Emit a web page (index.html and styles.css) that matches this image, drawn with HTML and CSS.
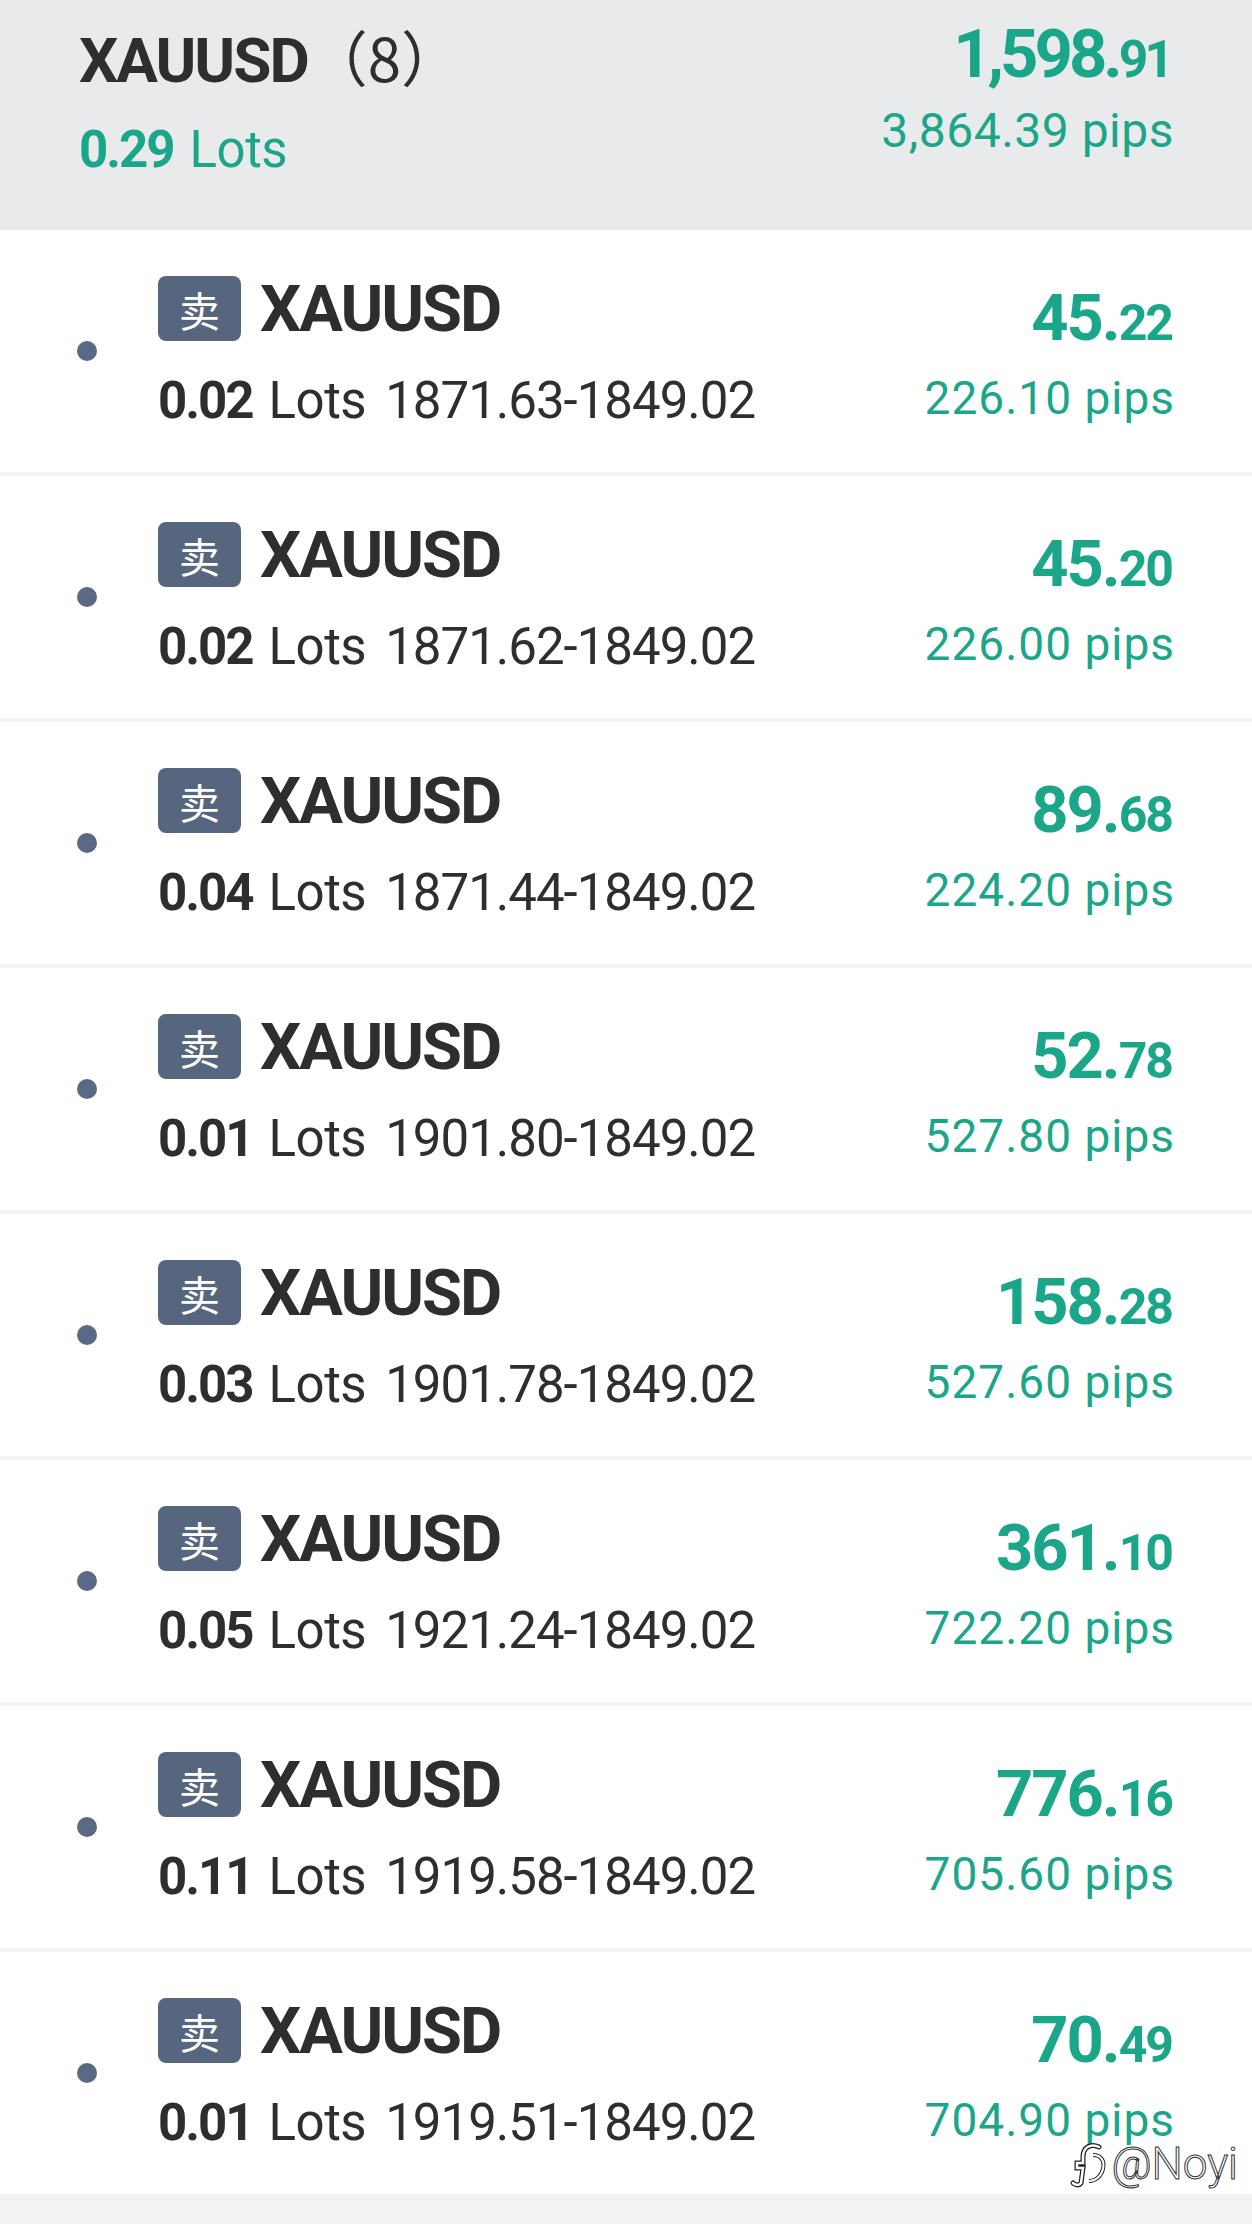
FILE: index.html
```html
<!DOCTYPE html>
<html lang="zh-CN">
<head>
    <meta charset="UTF-8">
    <meta name="viewport" content="width=device-width, initial-scale=1.0">
    <title>XAUUSD</title>
    <link rel="stylesheet" href="styles.css">
</head>
<body>
    <header class="summary">
        <div class="summary-left">
            <div class="summary-name">XAUUSD<span class="summary-count">（8）</span></div>
            <div class="summary-lots"><strong>0.29</strong><span class="lots">Lots</span></div>
        </div>
        <div class="summary-right">
            <div class="summary-profit">1,598.<span class="cents">91</span></div>
            <div class="summary-pips">3,864.39 pips</div>
        </div>
    </header>

    <div class="orders">
        <div class="order">
            <span class="order-dot"></span>
            <div class="order-info">
                <div class="order-head"><span class="badge">卖</span><span class="order-symbol">XAUUSD</span></div>
                <div class="order-meta"><strong>0.02</strong><span class="lots">Lots</span><span class="range">1871.63-1849.02</span></div>
            </div>
            <div class="order-result">
                <div class="order-profit">45.<span class="cents">22</span></div>
                <div class="order-pips">226.10 pips</div>
            </div>
        </div>

        <div class="order">
            <span class="order-dot"></span>
            <div class="order-info">
                <div class="order-head"><span class="badge">卖</span><span class="order-symbol">XAUUSD</span></div>
                <div class="order-meta"><strong>0.02</strong><span class="lots">Lots</span><span class="range">1871.62-1849.02</span></div>
            </div>
            <div class="order-result">
                <div class="order-profit">45.<span class="cents">20</span></div>
                <div class="order-pips">226.00 pips</div>
            </div>
        </div>

        <div class="order">
            <span class="order-dot"></span>
            <div class="order-info">
                <div class="order-head"><span class="badge">卖</span><span class="order-symbol">XAUUSD</span></div>
                <div class="order-meta"><strong>0.04</strong><span class="lots">Lots</span><span class="range">1871.44-1849.02</span></div>
            </div>
            <div class="order-result">
                <div class="order-profit">89.<span class="cents">68</span></div>
                <div class="order-pips">224.20 pips</div>
            </div>
        </div>

        <div class="order">
            <span class="order-dot"></span>
            <div class="order-info">
                <div class="order-head"><span class="badge">卖</span><span class="order-symbol">XAUUSD</span></div>
                <div class="order-meta"><strong>0.01</strong><span class="lots">Lots</span><span class="range">1901.80-1849.02</span></div>
            </div>
            <div class="order-result">
                <div class="order-profit">52.<span class="cents">78</span></div>
                <div class="order-pips">527.80 pips</div>
            </div>
        </div>

        <div class="order">
            <span class="order-dot"></span>
            <div class="order-info">
                <div class="order-head"><span class="badge">卖</span><span class="order-symbol">XAUUSD</span></div>
                <div class="order-meta"><strong>0.03</strong><span class="lots">Lots</span><span class="range">1901.78-1849.02</span></div>
            </div>
            <div class="order-result">
                <div class="order-profit">158.<span class="cents">28</span></div>
                <div class="order-pips">527.60 pips</div>
            </div>
        </div>

        <div class="order">
            <span class="order-dot"></span>
            <div class="order-info">
                <div class="order-head"><span class="badge">卖</span><span class="order-symbol">XAUUSD</span></div>
                <div class="order-meta"><strong>0.05</strong><span class="lots">Lots</span><span class="range">1921.24-1849.02</span></div>
            </div>
            <div class="order-result">
                <div class="order-profit">361.<span class="cents">10</span></div>
                <div class="order-pips">722.20 pips</div>
            </div>
        </div>

        <div class="order">
            <span class="order-dot"></span>
            <div class="order-info">
                <div class="order-head"><span class="badge">卖</span><span class="order-symbol">XAUUSD</span></div>
                <div class="order-meta"><strong>0.11</strong><span class="lots">Lots</span><span class="range">1919.58-1849.02</span></div>
            </div>
            <div class="order-result">
                <div class="order-profit">776.<span class="cents">16</span></div>
                <div class="order-pips">705.60 pips</div>
            </div>
        </div>

        <div class="order">
            <span class="order-dot"></span>
            <div class="order-info">
                <div class="order-head"><span class="badge">卖</span><span class="order-symbol">XAUUSD</span></div>
                <div class="order-meta"><strong>0.01</strong><span class="lots">Lots</span><span class="range">1919.51-1849.02</span></div>
            </div>
            <div class="order-result">
                <div class="order-profit">70.<span class="cents">49</span></div>
                <div class="order-pips">704.90 pips</div>
            </div>
        </div>
    </div>

    <!-- watermark over the last row -->
    <div class="watermark">
        <svg class="watermark-logo" width="40" height="50" viewBox="0 0 40 50">
            <path d="M30 8 C22 4 14 8 14 18 L14 24 L8 24 L8 29 L14 29 L12 44 C10 47 6 46 4 44"
                  fill="none" stroke="#222" stroke-width="5" stroke-linecap="round"/>
            <path d="M30 8 C22 4 14 8 14 18 L14 24 L8 24 L8 29 L14 29 L12 44 C10 47 6 46 4 44"
                  fill="none" stroke="#fff" stroke-width="2.5" stroke-linecap="round"/>
            <path d="M24 16 C32 16 36 22 34 30 C32 38 26 42 20 42"
                  fill="none" stroke="#222" stroke-width="4"/>
            <path d="M24 16 C32 16 36 22 34 30 C32 38 26 42 20 42"
                  fill="none" stroke="#fff" stroke-width="2"/>
        </svg>
        <span>@Noyi</span>
    </div>
</body>
</html>
```

FILE: styles.css
```css
body {
    font-family: Roboto, "Noto Sans CJK SC", sans-serif;
    margin: 0;
    padding: 0;
    background-color: #f2f2f3;
    color: #2e2e2e;
    position: relative;
    min-height: 2224px;
}

strong {
    font-weight: bold;
    letter-spacing: -2px;
}

.lots {
    margin-left: 16px;
    letter-spacing: -0.5px;
}

/* summary header */
.summary {
    display: flex;
    justify-content: space-between;
    align-items: flex-start;
    box-sizing: border-box;
    height: 230px;
    padding: 22px 78px 0 79px;
    background-color: #e9eaec;
}

.summary-left {
    padding-top: 4px;
}

.summary-name {
    font-size: 62px;
    font-weight: bold;
    line-height: 64px;
    letter-spacing: -2px;
}

.summary-count {
    font-weight: normal;
    font-family: "Noto Sans CJK SC", sans-serif;
    font-size: 60px;
    line-height: 1;
    letter-spacing: 0;
}

.summary-lots {
    margin-top: 32px;
    font-size: 51px;
    line-height: 50px;
    color: #1ba68a;
}

.summary-right {
    text-align: right;
    color: #1ba68a;
}

.summary-profit {
    font-size: 67px;
    font-weight: bold;
    line-height: 64px;
    letter-spacing: -4px;
    margin-right: 4px;
}

.summary-pips {
    margin-top: 20px;
    font-size: 48px;
    line-height: 50px;
    letter-spacing: 0.5px;
}

.cents {
    font-size: 0.77em;
    line-height: 1;
}

/* order rows */
.order {
    display: flex;
    align-items: center;
    box-sizing: border-box;
    height: 242px;
    margin-bottom: 4px;
    padding: 0 78px 0 77px;
    background-color: white;
}

.order-dot {
    width: 20px;
    height: 20px;
    border-radius: 50%;
    background-color: #5a6984;
    margin-right: 61px;
    flex-shrink: 0;
}

.order-info {
    flex: 1;
}

.order-head {
    display: flex;
    align-items: center;
    height: 64px;
}

.badge {
    display: flex;
    align-items: center;
    justify-content: center;
    width: 83px;
    height: 65px;
    margin-right: 19px;
    border-radius: 8px;
    background-color: #57667f;
    color: white;
    font-family: "Noto Sans CJK SC", sans-serif;
    font-size: 41px;
    font-weight: normal;
}

.order-symbol {
    font-size: 65px;
    font-weight: bold;
    line-height: 64px;
    letter-spacing: -2px;
}

.order-meta {
    margin-top: 35px;
    font-size: 51px;
    line-height: 50px;
}

.order-meta .range {
    margin-left: 19px;
    letter-spacing: -1px;
}

.order-result {
    text-align: right;
    color: #1ba68a;
    padding-top: 7px;
}

.order-profit {
    font-size: 65px;
    font-weight: bold;
    line-height: 64px;
    letter-spacing: -2px;
    margin-right: 2px;
}

.order-profit .cents {
    font-size: 50px;
}

.order-pips {
    margin-top: 23px;
    font-size: 46px;
    line-height: 50px;
    letter-spacing: 1px;
    margin-right: -1px;
}

/* watermark */
.watermark {
    position: absolute;
    top: 2138px;
    right: 14px;
    display: flex;
    align-items: center;
    gap: 2px;
    color: white;
    font-size: 44px;
    font-weight: 300;
    -webkit-text-stroke: 1px #333;
}
```
